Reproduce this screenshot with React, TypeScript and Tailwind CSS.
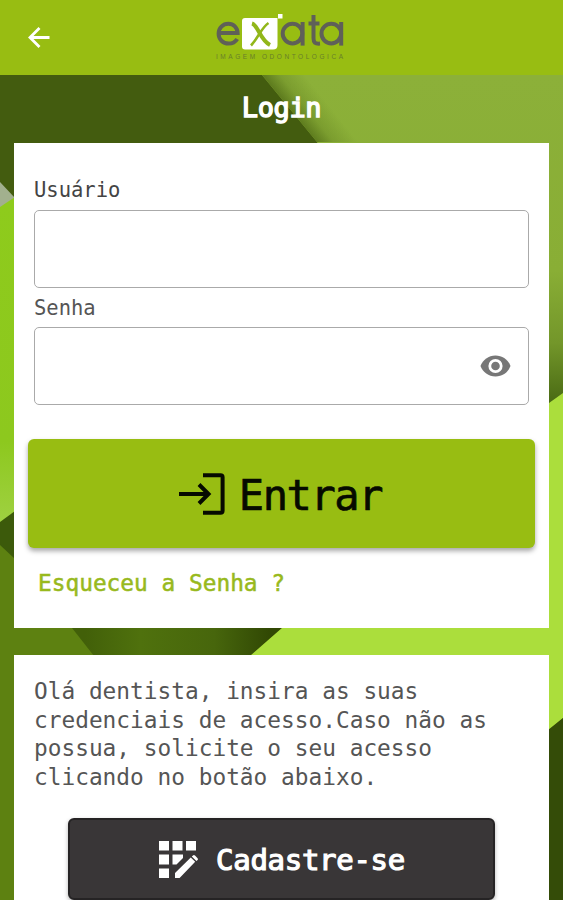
import React, { useState } from 'react'

function Backdrop() {
  return (
    <svg className="absolute inset-0 h-full w-full" viewBox="0 0 563 900" preserveAspectRatio="none" aria-hidden="true">
      <defs>
        <linearGradient id="moss" x1="0" y1="75" x2="0" y2="402" gradientUnits="userSpaceOnUse">
          <stop offset="0" stopColor="#8cb039" />
          <stop offset="0.6" stopColor="#89ae35" />
          <stop offset="0.82" stopColor="#73962a" />
          <stop offset="1" stopColor="#4a6b14" />
        </linearGradient>
        <linearGradient id="fold" x1="290" y1="108" x2="315" y2="88" gradientUnits="userSpaceOnUse">
          <stop offset="0" stopColor="#425c0e" stopOpacity="0.6" />
          <stop offset="0.4" stopColor="#425c0e" stopOpacity="0.22" />
          <stop offset="1" stopColor="#425c0e" stopOpacity="0" />
        </linearGradient>
        <linearGradient id="leaf" x1="0" y1="200" x2="0" y2="522" gradientUnits="userSpaceOnUse">
          <stop offset="0" stopColor="#8ecb1c" />
          <stop offset="0.75" stopColor="#8dc81e" />
          <stop offset="1" stopColor="#9fd141" />
        </linearGradient>
        <linearGradient id="pit" x1="85" y1="0" x2="270" y2="0" gradientUnits="userSpaceOnUse">
          <stop offset="0" stopColor="#426009" />
          <stop offset="0.3" stopColor="#4f710d" />
          <stop offset="0.7" stopColor="#47660c" />
          <stop offset="1" stopColor="#314804" />
        </linearGradient>
      </defs>
      <rect width="563" height="900" fill="#5d8111" />
      <path d="M0 75H262L317 142V300H0Z" fill="#435c0f" />
      <path d="M262 75H563V420H490L317 142Z" fill="url(#moss)" />
      <path d="M262 75H340L400 142H317Z" fill="url(#fold)" />
      <path d="M0 182L15 198L0 210Z" fill="#a2b08e" />
      <path d="M0 207L15 197V512L0 523Z" fill="url(#leaf)" />
      <path d="M0 522L15 511V559L0 545Z" fill="#3c5a0b" />
      <path d="M72 628H282L250 656H94Z" fill="url(#pit)" />
      <path d="M282 628L549 403L563 393V718L549 730V656H250Z" fill="#abde3c" />
      <path d="M548 730L563 718V900H548Z" fill="#344c08" />
    </svg>
  )
}

function Logo() {
  return (
    <svg className="h-[50px] w-[134px]" viewBox="0 0 134 50">
      <g fill="none" stroke="#5f6058" strokeWidth="4">
        <path d="M5 20H23.6C23.4 14.6 19.6 10.8 14.4 10.8C8.8 10.8 4.6 15 4.6 20.6C4.6 26.4 8.8 30.6 14.6 30.6C18.6 30.6 21.4 29 23.2 26" />
        <circle cx="78.5" cy="20.6" r="9.8" />
        <path d="M88.6 9V32.6" />
        <path d="M99.5 2V25C99.5 29.6 101 31 106 30.6M94.5 10.5H105.5" />
        <circle cx="117.3" cy="20.6" r="9.8" />
        <path d="M127.2 9V32.6" />
      </g>
      <path d="M31 5H63.5V32Q63.5 36.5 59 36.5H31Q28 36.5 28 33.5V8Q28 5 31 5Z" fill="#fff" />
      <rect x="64" y="1" width="4.5" height="4.5" fill="#fff" />
      <path d="M38 10.5C44 12 46 27 56 32" fill="none" stroke="#91b619" strokeWidth="4" />
      <path d="M54.5 10C48 14 44 25 37 32.5" fill="none" stroke="#91b619" strokeWidth="2.6" />
      <text x="2" y="45.5" textLength="127" fontSize="6.5" fontFamily="Liberation Sans, sans-serif" fill="#68802a">
        IMAGEM ODONTOLOGICA
      </text>
    </svg>
  )
}

function BackIcon() {
  return (
    <svg className="h-[24px] w-[24px]" viewBox="0 0 24 24" fill="none" stroke="currentColor" strokeWidth="2.8">
      <path d="M22.5 11.5H4M12.5 2L3 11.5L12.5 21" />
    </svg>
  )
}

function EnterIcon() {
  return (
    <svg className="h-[46px] w-[48px]" viewBox="0 0 48 46" fill="none" stroke="#060a00" strokeWidth="4">
      <path d="M24 4.2H41.5Q43.6 4.2 43.6 6.3V39.7Q43.6 41.8 41.5 41.8H24" />
      <path d="M0 23H29.5M20 13.5L29.5 23L20 32.5" />
    </svg>
  )
}

function EyeIcon() {
  return (
    <svg className="h-[22px] w-[31px]" viewBox="0 0 31 22">
      <path d="M15.5 .5C8.5 .5 2.8 4.8 .5 11C2.8 17.2 8.5 21.5 15.5 21.5S28.2 17.2 30.5 11C28.2 4.8 22.5 .5 15.5 .5Z" fill="#777" />
      <circle cx="15.5" cy="11" r="5.7" fill="none" stroke="#fff" strokeWidth="2.8" />
    </svg>
  )
}

function RegisterIcon() {
  return (
    <svg className="h-[39px] w-[41px]" viewBox="0 0 41 39" fill="currentColor">
      <path d="M1 1H11V10.5H1ZM14.5 1H24.5V10.5H14.5ZM28 1H38V10.5H28ZM1 14.5H11V24.5H1ZM1 28.5H11V38H1Z" />
      <path d="M14.5 14.5H25V18L18.5 24.5H14.5Z" />
      <path d="M17 38V33L32.8 17.5L37.2 21.8L21.6 38ZM33.8 16.4L35 15.4Q36 14.6 37 15.6L39.6 18.2Q40.4 19.2 39.6 20L38.4 21Z" />
    </svg>
  )
}

export default function App() {
  const [user, setUser] = useState('')
  const [password, setPassword] = useState('')
  const [visible, setVisible] = useState(false)

  return (
    <div className="relative h-[900px] w-[563px] overflow-hidden font-['DejaVu_Sans_Mono','Liberation_Mono',monospace]">
      <Backdrop />
      <div className="relative flex h-full flex-col">
        <header className="grid h-[75px] shrink-0 grid-cols-[1fr_134px_1fr] items-center bg-[#98bd12] pr-[2px]">
          <button aria-label="Voltar" className="pl-[27px] text-white">
            <BackIcon />
          </button>
          <Logo />
        </header>

        <h1 className="h-[68px] shrink-0 text-center text-[27px] leading-[65px] tracking-[-0.4px] text-white [-webkit-text-stroke:1.4px_white]">
          Login
        </h1>

        <section className="mx-[14px] flex h-[485px] shrink-0 flex-col bg-white px-[14px] pt-[31px]">
          <div className="px-[6px]">
            <label htmlFor="user" className="block h-[36px] text-[20.5px] leading-[32px] text-[#444]">
              Usuário
            </label>
            <input
              id="user"
              value={user}
              onChange={(e) => setUser(e.target.value)}
              className="block h-[78px] w-full rounded-[5px] border-[1.5px] border-[#aaa] px-4 text-2xl outline-none"
            />
            <label htmlFor="password" className="block h-[39px] text-[20.5px] leading-[40px] text-[#555]">
              Senha
            </label>
            <div className="flex h-[78px] items-center rounded-[5px] border-[1.5px] border-[#aaa] pr-[17px]">
              <input
                id="password"
                type={visible ? 'text' : 'password'}
                value={password}
                onChange={(e) => setPassword(e.target.value)}
                className="h-full min-w-0 flex-1 px-4 text-2xl outline-none"
              />
              <button aria-label="Mostrar senha" onClick={() => setVisible(!visible)}>
                <EyeIcon />
              </button>
            </div>
          </div>
          <button className="mt-[34px] flex h-[109px] shrink-0 items-center justify-center gap-[12px] rounded-[6px] bg-[#98bd12] pr-[2px] shadow-[0_3px_5px_rgba(0,0,0,0.35)]">
            <EnterIcon />
            <span className="pt-[5px] text-[42px] leading-none tracking-[-1.4px] text-[#060a00] [-webkit-text-stroke:0.7px_#060a00]">
              Entrar
            </span>
          </button>
          <a href="#" className="mt-[17px] pl-[10px] text-[22.8px] leading-[36px] text-[#98b91d] [-webkit-text-stroke:0.5px_#98b91d]">
            Esqueceu a Senha ?
          </a>
        </section>

        <section className="mx-[14px] mt-[27px] flex-1 bg-white px-[20px] pt-[22px]">
          <p className="text-[22.8px] leading-[28.6px] whitespace-nowrap text-[#555]">
            Olá dentista, insira as suas
            <br />
            credenciais de acesso.Caso não as
            <br />
            possua, solicite o seu acesso
            <br />
            clicando no botão abaixo.
          </p>
          <button className="mx-auto mt-[27px] flex h-[82px] w-[427px] items-center justify-center gap-[17px] rounded-[6px] border-2 border-[#252324] bg-[#393637] text-white shadow-[0_2px_4px_rgba(0,0,0,0.3)]">
            <RegisterIcon />
            <span className="pt-[3px] text-[29px] leading-none tracking-[-0.3px] [-webkit-text-stroke:1.2px_white]">Cadastre-se</span>
          </button>
        </section>
      </div>
    </div>
  )
}
